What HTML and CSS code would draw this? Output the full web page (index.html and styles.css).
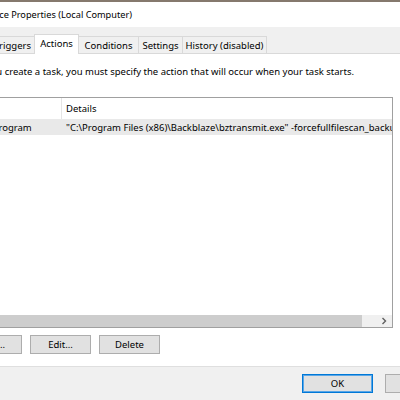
FILE: index.html
```html
<!DOCTYPE html>
<html>
<head>
<meta charset="utf-8">
<link rel="stylesheet" href="styles.css">
</head>
<body>
<div class="titlebar"><div class="title-box"><span class="title-text">Backblaze Service Properties (Local Computer)</span></div></div>
<div class="tabs">
  <div class="tab tab-first"><span>Triggers</span></div>
  <div class="tab active">Actions</div>
  <div class="tab w-cond">Conditions</div>
  <div class="tab w-set">Settings</div>
  <div class="tab w-hist">History (disabled)</div>
</div>
<div class="panel">
  <div class="intro-box"><span class="intro">When you create a task, you must specify the action that will occur when your task starts.</span></div>
  <div class="list">
    <div class="list-head">
      <div class="col1">Action</div>
      <div class="col2">Details</div>
    </div>
    <div class="list-row">
      <div class="col1">Start a program</div>
      <div class="col2">"C:\Program Files (x86)\Backblaze\bztransmit.exe" -forcefullfilescan_backup</div>
    </div>
    <div class="list-fill"></div>
    <div class="hscroll">
      <div class="thumb"></div>
      <div class="track"></div>
      <div class="arrow"><svg width="6" height="8" viewBox="0 0 6 8"><path d="M1.5 1 L4.5 4 L1.5 7" fill="none" stroke="#606060" stroke-width="1.4"/></svg></div>
    </div>
  </div>
  <div class="actions">
    <div class="btn btn-new">New...</div>
    <div class="btn">Edit...</div>
    <div class="btn">Delete</div>
  </div>
</div>
<div class="footer">
  <div class="btn btn-ok">OK</div>
  <div class="btn btn-cancel">Cancel</div>
</div>
</body>
</html>
```
FILE: styles.css
```css
html, body {
  margin: 0;
  padding: 0;
}
body {
  width: 400px;
  height: 400px;
  overflow: hidden;
  background: #f0f0f0;
  font-family: "Noto Sans", "Open Sans", sans-serif;
  font-size: 9.5px;
  color: #000;
}
.titlebar {
  height: 25px;
  border-top: 2px solid #85796d;
  background: #fff;
  display: flex;
  align-items: center;
  white-space: nowrap;
}
.title-box {
  width: 132px;
  display: flex;
  justify-content: flex-end;
}
.title-text {
  flex: none;
  font-size: 9.2px;
}
.tabs {
  height: 26px;
  display: flex;
  align-items: flex-end;
  background: #f0f0f0;
  white-space: nowrap;
}
.tab {
  box-sizing: border-box;
  flex: none;
  height: 17px;
  border: 1px solid #d9d9d9;
  border-bottom: none;
  border-right: none;
  background: #f0f0f0;
  display: flex;
  align-items: center;
  justify-content: center;
  line-height: 14px;
  padding-top: 1px;
}
.tab-first {
  width: 34px;
  justify-content: flex-end;
  padding-right: 3px;
  border-left: none;
}
.tab-first span { flex: none; }
.tab.active {
  height: 20px;
  width: 45px;
  background: #fff;
  margin-bottom: -1px;
  border-right: 1px solid #d9d9d9;
  position: relative;
  z-index: 1;
  padding-top: 0;
  padding-bottom: 1px;
}
.w-cond { width: 59px; border-left: none; }
.w-set { width: 44px; }
.w-hist { width: 85px; border-right: 1px solid #d9d9d9; }
.panel {
  box-sizing: border-box;
  height: 313px;
  background: #fff;
  border-top: 1px solid #d9d9d9;
  display: flex;
  flex-direction: column;
}
.intro-box {
  width: 354px;
  margin-top: 10px;
  display: flex;
  justify-content: flex-end;
  line-height: 16px;
  white-space: nowrap;
}
.intro { flex: none; }
.list {
  box-sizing: border-box;
  margin: 17px 0 0 -100px;
  width: 493px;
  height: 231px;
  border: 1px solid #a0a0a0;
  display: flex;
  flex-direction: column;
  overflow: hidden;
  flex: none;
}
.list-head, .list-row {
  display: flex;
  white-space: nowrap;
}
.list-head {
  height: 21px;
  align-items: center;
}
.list-head .col1 {
  height: 21px;
  border-right: 1px solid #e5e5e5;
}
.col1 {
  box-sizing: border-box;
  width: 161px;
  flex: none;
  padding-left: 60px;
  display: flex;
  align-items: center;
}
.col2 {
  padding-left: 4px;
}
.list-row {
  height: 16px;
  align-items: center;
  background: #e9e9e9;
}
.list-fill { flex: 1; }
.hscroll {
  height: 12px;
  display: flex;
  background: #f0f0f0;
}
.thumb {
  width: 461px;
  background: #cdcdcd;
}
.track { flex: 1; }
.arrow {
  width: 17px;
  display: flex;
  align-items: center;
  justify-content: center;
}
.actions {
  display: flex;
  gap: 8px;
  margin: 7px 0 0 -39px;
}
.btn {
  box-sizing: border-box;
  flex: none;
  width: 61px;
  height: 19px;
  border: 1px solid #adadad;
  background: #e1e1e1;
  display: flex;
  align-items: center;
  justify-content: center;
  line-height: 14px;
}
.footer {
  border-top: 1px solid #dfdfdf;
  display: flex;
  gap: 12px;
  padding: 7px 0 0 302px;
}
.btn.btn-ok {
  width: 71px;
  border-color: #0078d7;
  box-shadow: inset 0 0 0 1px #5aa6e6;
}
.btn-cancel {
  width: 71px;
}
```
